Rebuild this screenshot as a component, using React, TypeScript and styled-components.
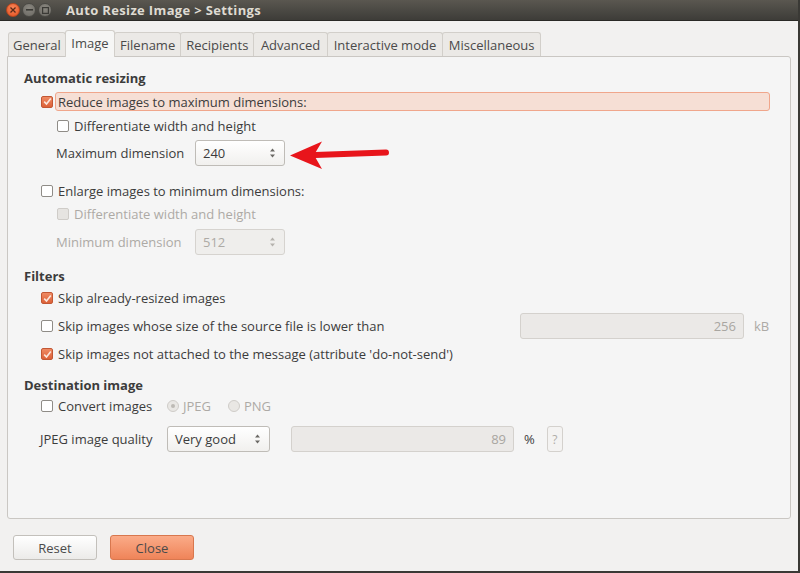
import React from "react";
import styled, { createGlobalStyle, css } from "styled-components";

const Global = createGlobalStyle`
  html, body { margin: 0; padding: 0; background: #f2f1f0; }
  * { box-sizing: border-box; }
`;

const FONT = `"Open Sans", "Noto Sans", "DejaVu Sans", sans-serif`;

const Window = styled.div`
  position: relative;
  width: 800px;
  height: 573px;
  background: #f2f1f0;
  font-family: ${FONT};
  font-size: 13px;
  color: #3c3c3c;
  display: flex;
  flex-direction: column;
  border-right: 2px solid #3a3935;
  border-bottom: 2px solid #3a3935;
  overflow: hidden;
`;

const TitleBar = styled.div`
  height: 21px;
  flex: none;
  background: linear-gradient(#5a5750, #3d3c38);
  display: flex;
  align-items: center;
  padding-left: 6px;
  border-bottom: 1px solid #2a2926;
`;

const WinButtons = styled.div`
  display: flex;
  gap: 2px;
  width: 60px;
`;

const WinBtn = styled.div<{ $close?: boolean }>`
  width: 14px;
  height: 14px;
  border-radius: 50%;
  display: flex;
  align-items: center;
  justify-content: center;
  ${(p) =>
    p.$close
      ? css`background: radial-gradient(circle at 50% 35%, #f9875a, #e4501f); border: 1px solid #b8461e;`
      : css`background: radial-gradient(circle at 50% 35%, #8a8780, #6b6963); border: 1px solid #4b4a45;`}
`;

const Title = styled.div`
  font-weight: 700;
  font-size: 13px;
  color: #dfdbd2;
  letter-spacing: 0.35px;
`;

const Body = styled.div`
  flex: 1;
  display: flex;
  flex-direction: column;
  padding: 9px 8px 0 7px;
`;

const TabBar = styled.div`
  display: flex;
  align-items: flex-end;
  height: 26px;
  padding-left: 1px;
  position: relative;
  z-index: 1;
`;

const Tab = styled.div<{ $active?: boolean; $pad?: number }>`
  height: ${(p) => (p.$active ? 27 : 24)}px;
  padding: 0 ${(p) => p.$pad ?? 5}px;
  display: flex;
  align-items: center;
  border: 1px solid #d2cfca;
  border-bottom: none;
  border-radius: 3px 3px 0 0;
  color: #4a4a4a;
  margin-right: -1px;
  background: ${(p) => (p.$active ? "#f6f6f5" : "#ebe9e6")};
  margin-bottom: ${(p) => (p.$active ? -1 : 0)}px;
  padding-bottom: ${(p) => (p.$active ? 2 : 0)}px;
`;

const Panel = styled.div`
  position: relative;
  width: 784px;
  height: 463px;
  border: 1px solid #cac7c3;
  border-radius: 0 3px 3px 3px;
  background: #f5f5f5;
  padding: 12px 0 0 16px;
  display: flex;
  flex-direction: column;
`;

const SectionTitle = styled.div<{ $mt: number }>`
  font-weight: 700;
  height: 18px;
  line-height: 18px;
  margin-top: ${(p) => p.$mt}px;
`;

const Row = styled.div<{ $mt: number; $indent: number; $h?: number }>`
  display: flex;
  align-items: center;
  height: ${(p) => p.$h ?? 18}px;
  margin-top: ${(p) => p.$mt}px;
  padding-left: ${(p) => p.$indent}px;
`;

const Highlight = styled.div`
  display: flex;
  align-items: center;
  height: 19px;
  width: 715px;
  margin-left: -3px;
  padding-left: 2px;
  background: #f6dfd5;
  border: 1px solid #f0a68b;
  border-radius: 3px;
`;

const Box = styled.span<{ $checked?: boolean; $disabled?: boolean }>`
  width: 12px;
  height: 12px;
  flex: none;
  border-radius: 2px;
  display: inline-flex;
  align-items: center;
  justify-content: center;
  margin-right: 5px;
  ${(p) =>
    p.$checked
      ? css`background: linear-gradient(#ef8a63, #dc6138); border: 1px solid #c25734;`
      : p.$disabled
      ? css`background: #e6e4e1; border: 1px solid #cfccc8;`
      : css`background: #fff; border: 1px solid #8f8c87;`}
`;

const Radio = styled.span`
  width: 12px;
  height: 12px;
  border-radius: 50%;
  border: 1px solid #cfccc8;
  background: #e9e7e4;
  display: inline-flex;
  align-items: center;
  justify-content: center;
  margin-right: 4px;
  flex: none;
`;

const Dot = styled.span`
  width: 4px;
  height: 4px;
  border-radius: 50%;
  background: #bdbab5;
`;

const Label = styled.span<{ $disabled?: boolean; $w?: number }>`
  color: ${(p) => (p.$disabled ? "#adaaa5" : "#3c3c3c")};
  white-space: nowrap;
  ${(p) => (p.$w ? `width: ${p.$w}px; flex: none;` : "")}
`;

const Spin = styled.div<{ $disabled?: boolean; $w: number }>`
  width: ${(p) => p.$w}px;
  height: 26px;
  border-radius: 3px;
  border: 1px solid ${(p) => (p.$disabled ? "#d6d3cf" : "#bfbcb7")};
  background: ${(p) => (p.$disabled ? "#efeeec" : "linear-gradient(#ffffff, #f1f0ee)")};
  color: ${(p) => (p.$disabled ? "#adaaa5" : "#3c3c3c")};
  display: flex;
  align-items: center;
  justify-content: space-between;
  padding: 0 8px 0 7px;
  flex: none;
`;

const Field = styled.div<{ $w: number }>`
  width: ${(p) => p.$w}px;
  height: 26px;
  border-radius: 3px;
  border: 1px solid #d4d1cd;
  background: #ebe9e7;
  color: #a9a6a1;
  display: flex;
  align-items: center;
  justify-content: flex-end;
  padding-right: 7px;
  flex: none;
`;

const Unit = styled.span<{ $disabled?: boolean }>`
  color: ${(p) => (p.$disabled ? "#adaaa5" : "#3c3c3c")};
  margin-left: 10px;
`;

const Spacer = styled.span<{ $w: number }>`
  width: ${(p) => p.$w}px;
  flex: none;
`;

const HelpBtn = styled.div`
  width: 16px;
  height: 26px;
  border-radius: 3px;
  border: 1px solid #d4d1cd;
  background: #f4f3f2;
  color: #b0ada8;
  display: flex;
  align-items: center;
  justify-content: center;
  margin-left: 12px;
  font-size: 12px;
`;

const Footer = styled.div`
  display: flex;
  gap: 13px;
  padding: 16px 0 0 6px;
`;

const Button = styled.div<{ $primary?: boolean }>`
  width: 84px;
  height: 25px;
  border-radius: 3px;
  display: flex;
  align-items: center;
  justify-content: center;
  color: #4a4a4a;
  ${(p) =>
    p.$primary
      ? css`background: linear-gradient(#fbab88, #ef8459); border: 1px solid #d8774e;`
      : css`background: linear-gradient(#ffffff, #ecebe9); border: 1px solid #c3c0bb;`}
`;

const Arrow = styled.svg`
  position: absolute;
  left: 281px;
  top: 81px;
`;

const Check = () => (
  <svg width="9" height="9" viewBox="0 0 9 9">
    <path d="M1.2 4.6 L3.5 7 L7.8 1.6" fill="none" stroke="#fbe7dd" strokeWidth="1.6" />
  </svg>
);

const SpinArrows = ({ color }: { color: string }) => (
  <svg width="7" height="12" viewBox="0 0 7 12">
    <path d="M1 4.5 L3.5 1.5 L6 4.5 Z" fill={color} />
    <path d="M1 7.5 L3.5 10.5 L6 7.5 Z" fill={color} />
  </svg>
);

export default function App() {
  return (
    <>
      <Global />
      <Window>
        <TitleBar>
          <WinButtons>
            <WinBtn $close>
              <svg width="6" height="6" viewBox="0 0 6 6">
                <path d="M0.5 0.5 L5.5 5.5 M5.5 0.5 L0.5 5.5" stroke="#5a2a18" strokeWidth="1.3" />
              </svg>
            </WinBtn>
            <WinBtn>
              <svg width="7" height="2" viewBox="0 0 7 2">
                <rect width="7" height="1.6" fill="#3b3a36" />
              </svg>
            </WinBtn>
            <WinBtn>
              <svg width="7" height="7" viewBox="0 0 7 7">
                <rect x="0.6" y="0.6" width="5.8" height="5.8" fill="none" stroke="#3b3a36" strokeWidth="1.2" />
              </svg>
            </WinBtn>
          </WinButtons>
          <Title>Auto Resize Image &gt; Settings</Title>
        </TitleBar>
        <Body>
          <TabBar>
            <Tab $pad={4}>General</Tab>
            <Tab $active $pad={5.5}>Image</Tab>
            <Tab $pad={5}>Filename</Tab>
            <Tab $pad={5}>Recipients</Tab>
            <Tab $pad={6.5}>Advanced</Tab>
            <Tab $pad={6}>Interactive mode</Tab>
            <Tab $pad={5.5}>Miscellaneous</Tab>
          </TabBar>
          <Panel>
            <SectionTitle $mt={0}>Automatic resizing</SectionTitle>
            <Row $mt={5} $indent={17} $h={19}>
              <Box $checked>
                <Check />
              </Box>
              <Highlight>
                <Label>Reduce images to maximum dimensions:</Label>
              </Highlight>
            </Row>
            <Row $mt={6} $indent={33}>
              <Box />
              <Label>Differentiate width and height</Label>
            </Row>
            <Row $mt={5} $indent={32} $h={26}>
              <Label $w={139}>Maximum dimension</Label>
              <Spin $w={90}>
                <span>240</span>
                <SpinArrows color="#6a6864" />
              </Spin>
            </Row>
            <Row $mt={16} $indent={17}>
              <Box />
              <Label>Enlarge images to minimum dimensions:</Label>
            </Row>
            <Row $mt={5} $indent={33}>
              <Box $disabled />
              <Label $disabled>Differentiate width and height</Label>
            </Row>
            <Row $mt={6} $indent={32} $h={25}>
              <Label $disabled $w={139}>
                Minimum dimension
              </Label>
              <Spin $w={90} $disabled>
                <span>512</span>
                <SpinArrows color="#b5b2ad" />
              </Spin>
            </Row>
            <SectionTitle $mt={13}>Filters</SectionTitle>
            <Row $mt={4} $indent={17}>
              <Box $checked>
                <Check />
              </Box>
              <Label>Skip already-resized images</Label>
            </Row>
            <Row $mt={6} $indent={17} $h={26}>
              <Box />
              <Label $w={462}>Skip images whose size of the source file is lower than</Label>
              <Field $w={224}>256</Field>
              <Unit $disabled>kB</Unit>
            </Row>
            <Row $mt={6} $indent={17}>
              <Box $checked>
                <Check />
              </Box>
              <Label>Skip images not attached to the message (attribute 'do-not-send')</Label>
            </Row>
            <SectionTitle $mt={13}>Destination image</SectionTitle>
            <Row $mt={3} $indent={17}>
              <Box />
              <Label $w={109}>Convert images</Label>
              <Radio>
                <Dot />
              </Radio>
              <Label $disabled $w={45}>
                JPEG
              </Label>
              <Radio />
              <Label $disabled>PNG</Label>
            </Row>
            <Row $mt={11} $indent={16} $h={26}>
              <Label $w={127}>JPEG image quality</Label>
              <Spin $w={103}>
                <span>Very good</span>
                <SpinArrows color="#6a6864" />
              </Spin>
              <Spacer $w={21} />
              <Field $w={223}>89</Field>
              <Unit>%</Unit>
              <HelpBtn>?</HelpBtn>
            </Row>
            <Arrow width="110" height="34" viewBox="0 0 110 34">
              <path d="M26 17 L97 14.5" stroke="#e8151b" strokeWidth="6" strokeLinecap="round" />
              <path d="M1 17.5 L33 3.5 L25 17 L33 31 Z" fill="#e8151b" />
            </Arrow>
          </Panel>
          <Footer>
            <Button>Reset</Button>
            <Button $primary>Close</Button>
          </Footer>
        </Body>
      </Window>
    </>
  );
}
